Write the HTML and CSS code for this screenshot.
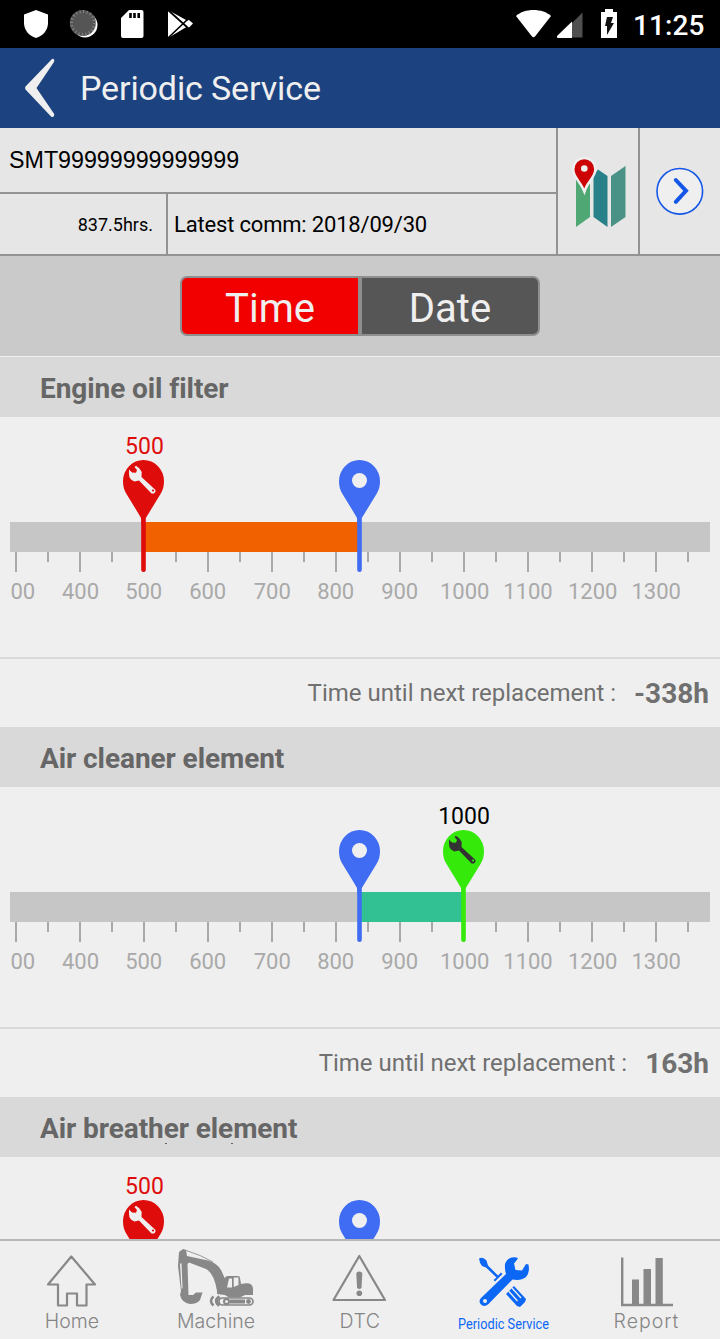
FILE: index.html
```html
<!DOCTYPE html>
<html lang="en">
<head>
  <meta charset="UTF-8">
  <meta name="viewport" content="width=device-width, initial-scale=1.0">
  <title>Periodic Service</title>
  <link rel="stylesheet" href="styles.css">
</head>
<body>
  <!-- shared shapes -->
  <svg class="defs" width="0" height="0">
    <defs>
      <path id="pin" d="M-2.500 111 V101 L-6 95 L-17 77 C-19.500 73 -20.500 69 -20.500 64 A20.500 21 0 0 1 20.500 64 C20.500 69 19.500 73 17 77 L6 95 L2.300 101 V153 Q2.300 155 0 155 Q-2.300 155 -2.300 153 V101 Z"/>
      <path id="wrench" d="M-14.500 57 V52.500 L-11.500 55.500 L-7.500 55.800 L-6.500 53 L-9 50 L-7.500 48.800 L-4 51.500 L-1.800 55 L-2 60 L12 73 Q12.500 75 10.500 76.500 L8 76.500 L-4.500 63.500 L-9 64.500 Q-14.500 62.500 -14.500 57 Z"/>
      <g id="scale">
        <rect x="10" y="105" width="700" height="30" fill="#c6c6c6"/>
        <path d="M16 135v20M80 135v20M144 135v20M208 135v20M272 135v20M336 135v20M400 135v20M464 135v20M528 135v20M592 135v20M656 135v20M48 135v10M112 135v10M176 135v10M240 135v10M304 135v10M368 135v10M432 135v10M496 135v10M560 135v10M624 135v10M688 135v10" stroke="#a9a9a9" stroke-width="2"/>
      </g>
    </defs>
  </svg>

  <div class="screen">
    <div class="status-bar">
      <svg width="200" height="48" viewBox="0 0 200 48">
        <path d="M36 10 L48 14.500 V23 C48 30 43 36 36 38 C29 36 24 30 24 23 V14.500 Z" fill="#fff"/>
        <circle cx="85" cy="25" r="12.500" fill="#fff"/>
        <circle cx="82.800" cy="23" r="13" fill="#555"/>
        <circle cx="83" cy="23" r="11.500" fill="none" stroke="#888" stroke-width="3" stroke-dasharray="1 2.600"/>
        <path d="M129 10 H141.500 Q143.500 10 143.500 12 V36 Q143.500 38 141.500 38 H123 Q121 38 121 36 V18 Z" fill="#fff"/>
        <path d="M130.500 13v5M134.500 13v5M138.700 13v5" stroke="#000" stroke-width="2.600"/>
        <path d="M168 10 L187 20.500 L189 20 L193 23.500 L189 27.500 L186.500 27 L168 38 Z" fill="#fff"/>
        <path d="M168 10 L188 28 M168 38 L188 19" stroke="#000" stroke-width="1.700"/>
      </svg>
      <div class="status-right">
        <svg width="116" height="48" viewBox="512 0 116 48">
          <path d="M516 16 C524 8 543 8 551 16 L535 36.500 Q533.500 38 532 36.500 Z" fill="#fff"/>
          <path d="M557.500 37.500 L582.500 12.500 V37.500 Z" fill="#4f4f4f"/>
          <path d="M557 36 L572 21.500 V38 H558 Q556.500 38 557 36 Z" fill="#fff"/>
          <path d="M605 9h8v3h4v26h-16V12h4z" fill="#fff"/>
          <path d="M607 17h6l-2 6h3l-7 12v-9h-2z" fill="#111"/>
        </svg>
        <span class="clock">11:25</span>
      </div>
    </div>

    <div class="app-bar">
      <svg width="80" height="80" viewBox="0 0 80 80">
        <path d="M51.500 11.500 Q53 10 54.300 12 L54 14 L36.500 40 L54.200 66 Q54.500 69.500 51.500 69 L25.500 41.500 Q24.500 40 25.500 38.500 Z" fill="#efefef"/>
      </svg>
      <h1>Periodic Service</h1>
    </div>

    <div class="machine-info">
      <div class="machine-main">
        <div class="serial"><span>SMT99999999999999</span></div>
        <div class="machine-row">
          <div class="hours">837.5hrs.</div>
          <div class="latest">Latest comm: 2018/09/30</div>
        </div>
      </div>
      <div class="map-cell">
        <svg width="80" height="126" viewBox="558 128 80 126">
          <path d="M576 174 L590 180 V217 L576 227 Z" fill="#4fa873"/>
          <path d="M593.500 176 L598 169.500 L607.500 176 V227 L593.500 217 Z" fill="#288088"/>
          <path d="M611 176 L625.500 166 V217 L611 227 Z" fill="#4a9286"/>
          <path d="M584.300 188.500 C581 181 574.500 176 574.500 169 A9.800 9.800 0 0 1 594.100 169 C594.100 176 587 181 584.300 188.500 Z" fill="#cc0205" stroke="#efefef" stroke-width="5" paint-order="stroke"/>
          <circle cx="584.300" cy="168.500" r="3.300" fill="#efefef"/>
        </svg>
      </div>
      <div class="next-cell">
        <svg width="80" height="126" viewBox="640 128 80 126">
          <circle cx="679.800" cy="191.300" r="22.800" fill="#efefef" stroke="#1457e8" stroke-width="1.600"/>
          <path d="M675.800 180 L686 190.800 L675.800 201.800" fill="none" stroke="#1457e8" stroke-width="4" stroke-linecap="round"/>
        </svg>
      </div>
    </div>

    <div class="switch-area">
      <div class="switch">
        <button class="active">Time</button>
        <button>Date</button>
      </div>
    </div>

    <div class="items">
      <section class="item">
        <h2>Engine oil filter</h2>
        <svg class="chart" width="720" height="240" viewBox="0 0 720 240">
          <use href="#scale"/>
          <rect x="143.500" y="105" width="216" height="30" fill="#f16100"/>
          <g class="labels">
            <text x="22.800" y="182">00</text>
            <text x="80.500" y="182">400</text>
            <text x="143.700" y="182">500</text>
            <text x="207.700" y="182">600</text>
            <text x="272.300" y="182">700</text>
            <text x="335.700" y="182">800</text>
            <text x="399.700" y="182">900</text>
            <text x="464.700" y="182">1000</text>
            <text x="528" y="182">1100</text>
            <text x="592.700" y="182">1200</text>
            <text x="656.200" y="182">1300</text>
          </g>
          <g transform="translate(143.500 0)">
            <use href="#pin" fill="#df0c0c"/>
            <use href="#wrench" fill="#efefef"/>
            <circle cx="9.500" cy="73.500" r="1.100" fill="#df0c0c"/>
          </g>
          <g transform="translate(359.500 0)">
            <use href="#pin" fill="#3f6cf2"/>
            <circle cy="63.500" r="7.500" fill="#efefef"/>
          </g>
          <text class="value over" x="144.500" y="37">500</text>
        </svg>
        <div class="remain">Time until next replacement : <b>-338h</b></div>
      </section>

      <section class="item">
        <h2>Air cleaner element</h2>
        <svg class="chart" width="720" height="240" viewBox="0 0 720 240">
          <use href="#scale"/>
          <rect x="359.500" y="105" width="104" height="30" fill="#32c192"/>
          <g class="labels">
            <text x="22.800" y="182">00</text>
            <text x="80.500" y="182">400</text>
            <text x="143.700" y="182">500</text>
            <text x="207.700" y="182">600</text>
            <text x="272.300" y="182">700</text>
            <text x="335.700" y="182">800</text>
            <text x="399.700" y="182">900</text>
            <text x="464.700" y="182">1000</text>
            <text x="528" y="182">1100</text>
            <text x="592.700" y="182">1200</text>
            <text x="656.200" y="182">1300</text>
          </g>
          <g transform="translate(359.500 0)">
            <use href="#pin" fill="#3f6cf2"/>
            <circle cy="63.500" r="7.500" fill="#efefef"/>
          </g>
          <g transform="translate(463.500 0)">
            <use href="#pin" fill="#35e90b"/>
            <use href="#wrench" fill="#333"/>
            <circle cx="9.500" cy="73.500" r="1.100" fill="#35e90b"/>
          </g>
          <text class="value" x="464" y="37">1000</text>
        </svg>
        <div class="remain">Time until next replacement : <b>163h</b></div>
      </section>

      <section class="item">
        <h2>Air breather element</h2>
        <svg class="chart" width="720" height="82" viewBox="0 0 720 82">
          <path d="M165 -13.500h2M231 -13.500h2" stroke="#666" stroke-width="1"/>
          <g transform="translate(143.500 0)">
            <use href="#pin" fill="#df0c0c"/>
            <use href="#wrench" fill="#efefef"/>
            <circle cx="9.500" cy="73.500" r="1.100" fill="#df0c0c"/>
          </g>
          <g transform="translate(359.500 0)">
            <use href="#pin" fill="#3f6cf2"/>
            <circle cy="63.500" r="7.500" fill="#efefef"/>
          </g>
          <text class="value over" x="144.500" y="37">500</text>
        </svg>
      </section>
    </div>

    <nav class="tab-bar">
      <a class="tab">
        <svg width="144" height="68" viewBox="0 1241 144 68">
          <path d="M71.300 1256.500 L95 1284.500 H86.500 V1305.500 H77 V1293.500 H67 V1305.500 H58 V1284.500 H48 Z" fill="none" stroke="#888" stroke-width="2.200" stroke-linejoin="round"/>
        </svg>
        <span class="home">Home</span>
      </a>
      <a class="tab">
        <svg width="144" height="68" viewBox="144 1241 144 68">
          <path d="M179 1252 L183 1249 L186 1250 L187 1256 L208 1260.500 Q217 1263 221 1270 L227 1283 L217 1291 Q214 1273 206 1269 L189 1262.500 L187.500 1264 L188.500 1295 L193 1295 L196 1292.500 L202.500 1292.500 L200 1300 Q197 1304 190 1304 Q182 1303 180 1295 L181 1291 L178 1266 Z" fill="#888"/>
          <path d="M180 1264 L181.500 1263 L182.500 1288 L181.500 1289 Z" fill="#efefef"/>
          <path d="M185 1250 L200 1255.500 L213 1262" fill="none" stroke="#999" stroke-width="1"/>
          <path d="M217 1291 L225 1278 Q225.500 1276 228 1276 H238 Q240 1276 240 1278 L241 1284 Q253 1281 253 1289 V1295 H245 L240 1297.500 H229 L225 1295 L217 1294 Z" fill="#888"/>
          <path d="M229 1278.500h3v9h-5zM233.700 1277.500h4.800v7.500l-4.800 2z" fill="#efefef"/>
          <rect x="219" y="1298" width="34" height="7" rx="3.500" fill="#efefef" stroke="#888" stroke-width="1.700"/>
          <path d="M213.500 1296.500 Q208.500 1301 213.500 1305.500" fill="none" stroke="#888" stroke-width="2.600"/>
          <path d="M219.500 1296.500 Q213.500 1301 219.500 1305.500" fill="none" stroke="#888" stroke-width="3.400"/>
          <circle cx="226.500" cy="1301.500" r="3.500" fill="#888"/>
          <path d="M230 1301.500 H245" stroke="#888" stroke-width="4"/>
          <circle cx="226.500" cy="1301.500" r="1.500" fill="#efefef"/>
          <circle cx="248.500" cy="1301.500" r="2.400" fill="#888"/>
        </svg>
        <span class="machine">Machine</span>
      </a>
      <a class="tab">
        <svg width="144" height="68" viewBox="288 1241 144 68">
          <path d="M359.300 1256 L385 1300 H333.500 Z" fill="none" stroke="#888" stroke-width="2.200" stroke-linejoin="round"/>
          <path d="M356.300 1274 Q356.300 1271.500 359.300 1271.500 Q362.300 1271.500 362.300 1274 L361.500 1288 Q359.300 1290 357.100 1288 Z" fill="#888"/>
          <circle cx="359.300" cy="1293.300" r="2.800" fill="#888"/>
        </svg>
        <span class="dtc">DTC</span>
      </a>
      <a class="tab active">
        <svg width="144" height="68" viewBox="432 1241 144 68">
          <path d="M479 1258.500 Q483 1256.500 486.500 1260.500 L488 1265.500 L498 1275.500 L501 1272.500 L502.500 1274 L495 1281.500 L493.500 1280 L496.500 1277.500 L486 1267.500 L482 1266 Q479.500 1263 479 1258.500 Z" fill="#0c67f5"/>
          <path d="M505 1264 Q508 1256 516.500 1257.500 L518 1258.500 L514 1263.500 L515.500 1270 L522 1270.500 L526 1264 L528.500 1264.500 Q530 1273 526 1277 Q521 1281 512.500 1279.500 L488.500 1304 Q484 1308 480.500 1304 Q478 1300 482 1297 L506 1274 Q504.500 1269 505 1264 Z" fill="#0c67f5"/>
          <circle cx="485" cy="1301" r="2" fill="#efefef"/>
          <path d="M506 1294 L514 1286 L526 1299 L525 1302 L520 1307 L517 1306 Z" fill="#0c67f5"/>
          <path d="M508.500 1291 L517.500 1301 M512 1288 L521 1298" stroke="#efefef" stroke-width="1.300"/>
        </svg>
        <span class="service">Periodic Service</span>
      </a>
      <a class="tab">
        <svg width="144" height="68" viewBox="576 1241 144 68">
          <path d="M622.200 1257.500 V1305 H673" fill="none" stroke="#888" stroke-width="2.400"/>
          <path d="M632 1279.500h7V1304h-7zM643.500 1269h7.500v35h-7.500zM655.500 1258h7.300v46h-7.300z" fill="#888"/>
        </svg>
        <span class="report">Report</span>
      </a>
    </nav>
  </div>
</body>
</html>
```

FILE: styles.css
```css
* {
  box-sizing: border-box;
}
body {
  margin: 0;
  font-family: Roboto, sans-serif;
  background: #efefef;
}
svg {
  display: block;
  flex-shrink: 0;
}
.defs {
  position: absolute;
}
.screen {
  display: flex;
  flex-direction: column;
  width: 720px;
  height: 1339px;
  overflow: hidden;
}
.status-bar {
  display: flex;
  justify-content: space-between;
  height: 48px;
  background: #000;
}
.status-right {
  display: flex;
  padding-right: 15px;
}
.clock {
  width: 77px;
  padding-left: 5px;
  color: #fff;
  font-size: 28px;
  font-weight: 500;
  line-height: 51px;
  letter-spacing: 0.1px;
  white-space: nowrap;
}
.app-bar {
  display: flex;
  height: 80px;
  background: #1d4280;
}
h1 {
  margin: 0;
  color: #efefef;
  font-size: 34px;
  font-weight: 400;
  line-height: 80px;
  letter-spacing: -0.12px;
}
.machine-info {
  display: flex;
  height: 128px;
  background: #e6e6e6;
  border-bottom: 2px solid #939393;
}
.machine-main {
  width: 556px;
}
.serial {
  height: 66px;
  padding-left: 9px;
  border-bottom: 2px solid #939393;
  font-family: "Liberation Sans", Arial, sans-serif;
  font-size: 23.25px;
  line-height: 64px;
}
.machine-row {
  display: flex;
  height: 60px;
  line-height: 61px;
}
.hours {
  width: 168px;
  padding-right: 13px;
  border-right: 2px solid #939393;
  font-size: 18px;
  text-align: right;
}
.latest {
  padding-left: 6px;
  font-size: 22px;
  letter-spacing: -0.18px;
}
.map-cell {
  width: 82px;
  border-left: 2px solid #939393;
}
.next-cell {
  width: 82px;
  border-left: 2px solid #939393;
}
.switch-area {
  display: flex;
  justify-content: center;
  height: 101px;
  padding-top: 20px;
  background: #cacaca;
  border-bottom: 1px solid #efefef;
}
.switch {
  display: flex;
  width: 360px;
  height: 60px;
}
.switch button {
  width: 180px;
  padding: 5px 0 0;
  border: 2px solid #8f8f8f;
  border-radius: 0 7px 7px 0;
  background: #565656;
  color: #efefef;
  font-family: Roboto, sans-serif;
  font-size: 40px;
  line-height: 50px;
}
.switch button.active {
  border-radius: 7px 0 0 7px;
  background: #f20000;
}
.items {
  flex: 1;
  min-height: 0;
  overflow: hidden;
}
h2 {
  height: 60px;
  margin: 0;
  padding-left: 40px;
  background: #d9d9d9;
  color: #666;
  font-size: 28px;
  font-weight: 700;
  line-height: 63px;
  letter-spacing: -0.08px;
}
.chart {
  overflow: visible;
}
.labels {
  fill: #a9a9a9;
  font-size: 22px;
  text-anchor: middle;
}
.value {
  font-size: 23px;
  text-anchor: middle;
}
.value.over {
  fill: #df0c0c;
}
.remain {
  display: flex;
  justify-content: flex-end;
  gap: 18px;
  height: 70px;
  padding-right: 11px;
  border-top: 2px solid #d9d9d9;
  color: #707070;
  font-size: 24px;
  line-height: 68px;
}
.remain b {
  font-size: 28px;
  line-height: 70px;
}
.tab-bar {
  display: flex;
  height: 100px;
  border-top: 2px solid #b8b8b8;
}
.tab {
  display: flex;
  flex-direction: column;
  align-items: center;
  width: 144px;
  color: #858585;
  font-family: Inter, sans-serif;
  font-size: 19.5px;
  font-weight: 300;
  line-height: 24px;
}
.tab.active {
  color: #0c67f5;
}
.dtc {
  letter-spacing: 0.5px;
}
.report {
  padding-right: 3px;
  letter-spacing: 1px;
}
.service {
  font-family: Roboto, sans-serif;
  font-size: 15px;
  font-weight: 400;
  line-height: 30px;
  white-space: nowrap;
  transform: scaleX(0.85);
}
```
